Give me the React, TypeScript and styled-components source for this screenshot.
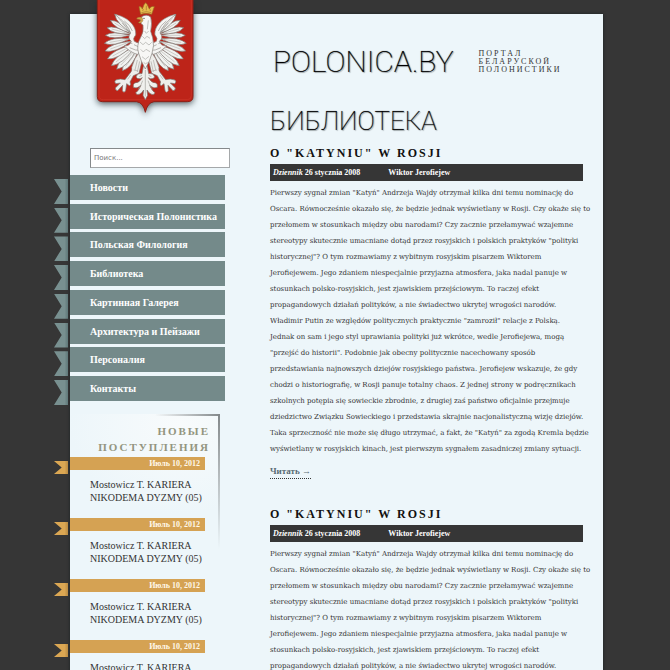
import React from "react";
import styled, { createGlobalStyle } from "styled-components";

const serif = `"Liberation Serif", "Times New Roman", serif`;
const smallSerif = `"DejaVu Serif", Georgia, serif`;

const GlobalStyle = createGlobalStyle`
  * { box-sizing: border-box; }
  body { margin: 0; background: #363636; font-family: ${serif}; color: #333; }
  h1, h2, h3, p, ul { margin: 0; padding: 0; font-weight: normal; }
  ul { list-style: none; }
  a { color: inherit; text-decoration: none; }
`;

const Page = styled.div`
  display: grid;
  grid-template-columns: 200px minmax(0, 1fr);
  margin: 14px 67px 0 70px;
  min-height: calc(100vh - 14px);
  background: #edf6fa;
  box-shadow: 0 0 3px #1c2224;
`;

const Sidebar = styled.aside`
  width: 155px;
`;

const EmblemLink = styled.a`
  display: block;
  height: 125px;
  margin: -14px 0 0 22px;
  svg { display: block; filter: drop-shadow(0 2px 3px rgba(20, 35, 40, 0.7)); }
`;

const Search = styled.form`
  margin: 23px 0 7px 20px;
`;

const SearchInput = styled.input`
  display: block;
  width: 140px;
  height: 20px;
  padding: 0 3px;
  border: 1px solid #a5a8aa;
  border-top-color: #85898b;
  border-left-color: #85898b;
  background: #fff;
  font: 7px "DejaVu Sans", sans-serif;
  color: #555;
  &::placeholder { color: #777; opacity: 1; }
`;

const Menu = styled.ul`
  display: flex;
  flex-direction: column;
  justify-content: space-between;
  height: 226px;
`;

const MenuItem = styled.li`
  position: relative;
  &::before {
    content: "";
    position: absolute;
    left: -16px;
    top: 4px;
    width: 14px;
    height: 25px;
    background: linear-gradient(90deg, #789090 75%, #5f7879);
    clip-path: polygon(0 0, 100% 0, 100% 100%, 0 100%, 55% 50%);
  }
`;

const MenuLink = styled.a`
  display: block;
  height: 25px;
  padding-left: 20px;
  background: #748a8a;
  color: #fff;
  font-size: 10px;
  font-weight: bold;
  line-height: 25px;
  white-space: nowrap;
`;

const Updates = styled.section`
  position: relative;
  width: 150px;
  margin-top: 13px;
  padding-top: 9px;
  background: radial-gradient(ellipse 110px 90px at 110px 10px, #f8fbfc, #edf6fa);
  &::before, &::after { content: ""; position: absolute; top: 0; right: 0; }
  &::before { width: 65px; height: 2px; background: linear-gradient(270deg, #83888a, transparent); }
  &::after { width: 2px; height: 135px; background: linear-gradient(#83888a, transparent); }
`;

const UpdatesTitle = styled.h2`
  margin-bottom: 2px;
  padding-right: 10px;
  color: #939580;
  font-size: 11px;
  font-weight: bold;
  line-height: 16px;
  letter-spacing: 2px;
  text-align: right;
  text-transform: uppercase;
`;

const Update = styled.li`
  height: 61px;
`;

const UpdateDate = styled.time`
  position: relative;
  display: block;
  width: 135px;
  height: 13px;
  padding-right: 5px;
  background: #d5a253;
  color: #fff8ea;
  font-size: 8px;
  font-weight: bold;
  line-height: 13px;
  text-align: right;
  &::before {
    content: "";
    position: absolute;
    left: -16px;
    top: 4px;
    width: 14px;
    height: 13px;
    background: linear-gradient(90deg, #dba753 75%, #b98b43);
    clip-path: polygon(0 0, 100% 0, 100% 100%, 0 100%, 55% 50%);
  }
`;

const UpdateLink = styled.a`
  display: block;
  padding: 8px 0 0 20px;
  font-size: 10px;
  line-height: 13px;
`;

const Content = styled.main`
  padding-right: 20px;
`;

const Header = styled.header`
  display: flex;
  align-items: center;
  gap: 25px;
  padding: 30px 0 0 3px;
`;

const Brand = styled.a`
  color: #000;
  font: 100 30px/36px Roboto, "Liberation Sans", sans-serif;
  text-shadow: 0 0 1px #222, 1px 1px 1px #9aa2a6;
`;

const Tagline = styled.p`
  font-size: 8px;
  line-height: 8px;
  letter-spacing: 2px;
  text-transform: uppercase;
`;

const Title = styled.h1`
  margin-top: 23px;
  color: #000;
  font: 100 26px/36px Roboto, "Liberation Sans", sans-serif;
  text-shadow: 0 0 1px #222, 1px 1px 1px #9aa2a6;
`;

const Article = styled.article`
  padding-top: 6px;
  margin-bottom: 21px;
`;

const Headline = styled.h2`
  color: #111;
  font-size: 12px;
  font-weight: bold;
  line-height: 16px;
  letter-spacing: 2px;
  text-transform: uppercase;
`;

const Meta = styled.p`
  display: flex;
  gap: 28px;
  margin-top: 3px;
  height: 17px;
  padding-left: 3px;
  background: #363636;
  color: #fff;
  font-size: 8px;
  font-weight: bold;
  line-height: 17px;
`;

const Body = styled.p`
  margin-top: 4px;
  font: 7px/16px ${smallSerif};
  white-space: pre;
`;

const More = styled.a`
  display: inline-block;
  margin-top: 8px;
  border-bottom: 1px dotted #333;
  color: #596c74;
  font-size: 9px;
  font-weight: bold;
  line-height: 13px;
`;

type Point = [number, number];
type FeatherData = { from: Point; to: Point; width: number };

const feathers: FeatherData[] = [
  { from: [206, 148], to: [157, 212], width: 20 },
  { from: [202, 144], to: [140, 208], width: 20 },
  { from: [196, 140], to: [124, 197], width: 19 },
  { from: [190, 134], to: [112, 177], width: 18 },
  { from: [184, 124], to: [105, 153], width: 17 },
  { from: [180, 116], to: [103, 130], width: 16 },
  { from: [178, 106], to: [106, 106], width: 15 },
  { from: [180, 102], to: [111, 83], width: 15 },
  { from: [184, 100], to: [121, 61], width: 15 },
  { from: [190, 102], to: [134, 43], width: 17 },
];

function Feather({ from, to, width }: FeatherData) {
  const dx = to[0] - from[0];
  const dy = to[1] - from[1];
  const length = Math.hypot(dx, dy);
  const nx = (-dy / length) * width;
  const ny = (dx / length) * width;
  const cx = from[0] + dx * 0.7;
  const cy = from[1] + dy * 0.7;
  return (
    <>
      <path
        d={`M${from[0]} ${from[1]}Q${cx + nx} ${cy + ny} ${to[0]} ${to[1]}Q${cx - nx} ${cy - ny} ${from[0]} ${from[1]}Z`}
        fill="#f1f2f0"
        stroke="#77736e"
        strokeWidth="2"
      />
      <path d={`M${from[0]} ${from[1]}L${from[0] + dx * 0.8} ${from[1] + dy * 0.8}`} stroke="#b9b8b4" strokeWidth="2" />
    </>
  );
}

function Wing() {
  return (
    <g>
      {feathers.map((f) => <Feather key={f.to.join()} {...f} />)}
      <path d="M134 43C172 50 200 77 197 105Q187 116 193 124Q207 134 218 126L219 164C195 167 175 150 162 137Q179 140 184 124Q170 113 182 99Q173 71 134 43Z" fill="#f5f5f3" stroke="#8b8884" strokeWidth="2" />
      <path d="M163 63Q181 75 187 93M157 69Q170 82 176 96M168 119Q177 129 187 131M179 143Q197 153 213 151M192 134Q204 143 218 140" fill="none" stroke="#94928e" strokeWidth="2" />
      <path d="M207 158Q194 171 185 202Q188 213 178 222L165 239Q151 235 137 240Q131 246 138 251L151 249L136 264Q136 272 143 272L158 256L157 272Q162 281 167 272L170 251L178 257Q185 255 180 246L190 227L207 220L219 171Z" fill="#eeeeeb" stroke="#77736e" strokeWidth="2" />
      <path d="M202 180L195 210M209 184L202 216M191 210L205 213M173 238L182 225" stroke="#aaa9a4" strokeWidth="2" fill="none" />
    </g>
  );
}

function Emblem() {
  return (
    <svg width="110" height="125" viewBox="66 0 330 375" role="img" aria-label="Polonica">
      <path d="M82 -5H369V290Q369 305 352 305H252Q232 308 226 337Q220 308 200 305H98Q82 305 82 290Z" fill="#bd2419" stroke="#8c2118" strokeWidth="3" />
      <path d="M87 0V287Q87 299 100 299H352Q364 299 364 287V0" fill="none" stroke="#cb3728" strokeWidth="2" />
      <Wing />
      <g transform="matrix(-1 0 0 1 452 0)"><Wing /></g>
      <path d="M220 199L216 221Q202 219 198 231Q202 238 211 236L217 233Q207 250 194 249Q188 253 190 262Q201 268 213 256Q205 275 197 278Q201 289 215 278L221 270L219 286L226 299L233 286L231 270L237 278Q251 289 255 278Q247 275 239 256Q251 268 262 262Q264 253 258 249Q245 250 235 233L241 236Q250 238 254 231Q250 219 236 221L232 199Z" fill="#f0f0ed" stroke="#77736e" strokeWidth="2" />
      <path d="M226 210V289M218 242Q211 262 205 268M234 242Q241 262 247 268M216 226L208 230M236 226L244 230" fill="none" stroke="#a3a29d" strokeWidth="2" />
      <path d="M214 51Q229 40 242 51Q247 69 242 94L248 113Q254 137 246 160Q240 182 226 207Q212 182 206 160Q198 137 212 112Q222 96 219 75Q213 73 211 65Z" fill="#f7f7f5" stroke="#85817c" strokeWidth="2" />
      <path d="M224 93L229 100L236 93M217 109L224 116L231 109L240 115M210 126L219 134L227 127L237 135L245 127M212 148L220 156L228 148L240 155M216 170L226 178L237 169M221 187L227 192L233 186M235 61L232 88" fill="none" stroke="#a8a7a3" strokeWidth="2" />
      <path d="M216 52Q202 49 199 57Q208 58 214 61L204 68Q215 73 219 61Z" fill="#d4a64a" stroke="#795522" strokeWidth="1" />
      <circle cx="222" cy="55" r="2" fill="#4e382d" />
      <path d="M212 43L207 20Q214 18 217 27L222 14L227 8L232 14L238 27Q242 17 253 20L245 43Q228 37 212 43Z" fill="#e7bd4d" stroke="#996c23" strokeWidth="2" />
      <path d="M214 38Q229 32 244 38M220 27L218 33M229 17V31M240 27L241 33" fill="none" stroke="#a4772c" strokeWidth="2" />
    </svg>
  );
}

const menu = [
  "Новости",
  "Историческая Полонистика",
  "Польская Филология",
  "Библиотека",
  "Картинная Галерея",
  "Архитектура и Пейзажи",
  "Персоналия",
  "Контакты",
];

const articleText = `Pierwszy sygnał zmian "Katyń" Andrzeja Wajdy otrzymał kilka dni temu nominację do
Oscara. Równocześnie okazało się, że będzie jednak wyświetlany w Rosji. Czy okaże się to
przełomem w stosunkach między obu narodami? Czy zacznie przełamywać wzajemne
stereotypy skutecznie umacniane dotąd przez rosyjskich i polskich praktyków "polityki
historycznej"? O tym rozmawiamy z wybitnym rosyjskim pisarzem Wiktorem
Jerofiejewem. Jego zdaniem niespecjalnie przyjazna atmosfera, jaka nadal panuje w
stosunkach polsko-rosyjskich, jest zjawiskiem przejściowym. To raczej efekt
propagandowych działań polityków, a nie świadectwo ukrytej wrogości narodów.
Władimir Putin ze względów politycznych praktycznie "zamroził" relacje z Polską.
Jednak on sam i jego styl uprawiania polityki już wkrótce, wedle Jerofiejewa, mogą
"przejść do historii". Podobnie jak obecny politycznie nacechowany sposób
przedstawiania najnowszych dziejów rosyjskiego państwa. Jerofiejew wskazuje, że gdy
chodzi o historiografię, w Rosji panuje totalny chaos. Z jednej strony w podręcznikach
szkolnych potępia się sowieckie zbrodnie, z drugiej zaś państwo oficjalnie przejmuje
dziedzictwo Związku Sowieckiego i przedstawia skrajnie nacjonalistyczną wizję dziejów.
Taka sprzeczność nie może się długo utrzymać, a fakt, że "Katyń" za zgodą Kremla będzie
wyświetlany w rosyjskich kinach, jest pierwszym sygnałem zasadniczej zmiany sytuacji.`;

export default function App() {
  return (
    <>
      <GlobalStyle />
      <Page>
        <Sidebar>
          <EmblemLink href="#"><Emblem /></EmblemLink>
          <Search role="search">
            <SearchInput type="text" aria-label="Поиск" placeholder="Поиск..." />
          </Search>
          <nav>
            <Menu>
              {menu.map((label) => (
                <MenuItem key={label}><MenuLink href="#">{label}</MenuLink></MenuItem>
              ))}
            </Menu>
          </nav>
          <Updates>
            <UpdatesTitle>Новые<br />поступления</UpdatesTitle>
            <ul>
              {[1, 2, 3, 4].map((id) => (
                <Update key={id}>
                  <UpdateDate dateTime="2012-07-10">Июль 10, 2012</UpdateDate>
                  <UpdateLink href="#">Mostowicz T. KARIERA<br />NIKODEMA DYZMY (05)</UpdateLink>
                </Update>
              ))}
            </ul>
          </Updates>
        </Sidebar>
        <Content>
          <Header>
            <Brand href="#">POLONICA.BY</Brand>
            <Tagline>Портал<br />беларуской<br />полонистики</Tagline>
          </Header>
          <Title>БИБЛИОТЕКА</Title>
          {[1, 2].map((id) => (
            <Article key={id}>
              <Headline>O "Katyniu" w Rosji</Headline>
              <Meta><span><em>Dziennik</em> 26 stycznia 2008</span><span>Wiktor Jerofiejew</span></Meta>
              <Body>{articleText}</Body>
              <More href="#">Читать →</More>
            </Article>
          ))}
        </Content>
      </Page>
    </>
  );
}
